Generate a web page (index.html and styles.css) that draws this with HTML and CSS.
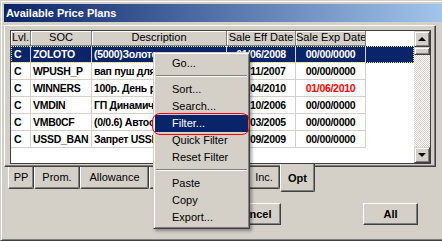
FILE: index.html
```html
<!DOCTYPE html>
<html lang="ru">
<head>
  <meta charset="UTF-8">
  <meta name="viewport" content="width=device-width, initial-scale=1.0">
  <title>Available Price Plans</title>
  <link rel="stylesheet" href="styles.css">
</head>
<body>
  <div class="window">
    <div class="titlebar">Available Price Plans</div>
    <div class="client">
      <div class="tabpage">
        <div class="grid">
          <div class="grid-body">
            <div class="row head">
              <div class="hcell">Lvl.</div>
              <div class="hcell">SOC</div>
              <div class="hcell">Description</div>
              <div class="hcell">Sale Eff Date</div>
              <div class="hcell">Sale Exp Date</div>
              <div class="filler"></div>
            </div>
            <div class="row selected">
              <div class="cell lvl">C</div>
              <div class="cell">ZOLOTO</div>
              <div class="cell">(5000)Золото</div>
              <div class="cell date">01/06/2008</div>
              <div class="cell date">00/00/0000</div>
              <div class="filler"></div>
            </div>
            <div class="row">
              <div class="cell lvl">C</div>
              <div class="cell">WPUSH_P</div>
              <div class="cell">вап пуш для абонентов</div>
              <div class="cell date">01/11/2007</div>
              <div class="cell date">00/00/0000</div>
              <div class="filler"></div>
            </div>
            <div class="row">
              <div class="cell lvl">C</div>
              <div class="cell">WINNERS</div>
              <div class="cell">100р. День рождения</div>
              <div class="cell date">01/04/2010</div>
              <div class="cell date expired">01/06/2010</div>
              <div class="filler"></div>
            </div>
            <div class="row">
              <div class="cell lvl">C</div>
              <div class="cell">VMDIN</div>
              <div class="cell">ГП Динамичный</div>
              <div class="cell date">01/10/2006</div>
              <div class="cell date">00/00/0000</div>
              <div class="filler"></div>
            </div>
            <div class="row">
              <div class="cell lvl">C</div>
              <div class="cell">VMB0CF</div>
              <div class="cell">(0/0.6) Автоответчик</div>
              <div class="cell date">01/03/2005</div>
              <div class="cell date">00/00/0000</div>
              <div class="filler"></div>
            </div>
            <div class="row">
              <div class="cell lvl">C</div>
              <div class="cell">USSD_BAN</div>
              <div class="cell">Запрет USSD</div>
              <div class="cell date">01/09/2009</div>
              <div class="cell date">00/00/0000</div>
              <div class="filler"></div>
            </div>
          </div>
          <div class="vscroll">
            <div class="sb-btn"><span class="arrow-up"></span></div>
            <div class="sb-thumb"></div>
            <div class="sb-track"></div>
            <div class="sb-btn"><span class="arrow-down"></span></div>
          </div>
        </div>
      </div>

      <div class="tabs">
        <div class="tab">PP</div>
        <div class="tab">Prom.</div>
        <div class="tab">Allowance</div>
        <div class="tab">Serv.</div>
        <div class="tab">Excl.</div>
        <div class="tab">Inc.</div>
        <div class="tab active">Opt</div>
      </div>

      <div class="buttons">
        <button class="btn">OK</button>
        <button class="btn">Cancel</button>
        <button class="btn btn-all">All</button>
      </div>
    </div>
  </div>

  <!-- context menu over the grid -->
  <div class="menu">
    <div class="menu-item">Go...</div>
    <div class="menu-sep"></div>
    <div class="menu-item">Sort...</div>
    <div class="menu-item">Search...</div>
    <div class="menu-item active">Filter...<span class="ring"></span></div>
    <div class="menu-item">Quick Filter</div>
    <div class="menu-item">Reset Filter</div>
    <div class="menu-sep"></div>
    <div class="menu-item">Paste</div>
    <div class="menu-item">Copy</div>
    <div class="menu-item">Export...</div>
  </div>
</body>
</html>
```

FILE: styles.css
```css
* {
  box-sizing: border-box;
}
body {
  margin: 0;
  width: 442px;
  height: 241px;
  overflow: hidden;
  background-color: #d4d0c8;
  font-family: "Liberation Sans", Arial, sans-serif;
  font-size: 11px;
  color: #000;
}

/* window frame */
.window {
  width: 460px;
  height: 241px;
  display: flex;
  flex-direction: column;
  padding: 3px;
  background-color: #d4d0c8;
  border: 1px solid;
  border-color: #d4d0c8 #404040 #404040 #d4d0c8;
  box-shadow: inset 1px 1px #fff, inset -1px -1px #808080;
}
.titlebar {
  flex: none;
  height: 18px;
  line-height: 18px;
  padding-left: 2px;
  color: #fff;
  font-weight: bold;
  background: linear-gradient(to right, #0a246a, #a6caf0);
}
.client {
  flex: 1;
  display: flex;
  flex-direction: column;
  padding-top: 3px;
}

/* tab page with the grid */
.tabpage {
  width: 432px;
  padding: 4px 4px 2px 5px;
  border: 1px solid;
  border-color: #fff #404040 #404040 #fff;
  box-shadow: inset -1px -1px #808080;
}
.grid {
  display: flex;
  height: 134px;
  border: 1px solid #404040;
}
.grid-body {
  flex: 1;
  overflow: hidden;
  background-color: #fff;
}
.row {
  display: grid;
  grid-template-columns: 20px 61px 135px 69px 70px 1fr;
  height: 17px;
}
.row.head {
  height: 15px;
}
.hcell {
  line-height: 13px;
  text-align: center;
  white-space: nowrap;
  overflow: hidden;
  background-color: #d4d0c8;
  border-right: 1px solid #808080;
  border-bottom: 1px solid #808080;
  box-shadow: inset 1px 1px #fff;
}
.cell {
  padding: 0 2px;
  line-height: 16px;
  font-size: 10.5px;
  font-weight: bold;
  letter-spacing: -0.3px;
  white-space: nowrap;
  overflow: hidden;
  border-right: 1px solid #d4d0c8;
  border-bottom: 1px solid #d4d0c8;
}
.cell.lvl {
  padding-left: 3px;
}
.cell.date {
  text-align: center;
}
.cell.expired {
  color: #f00;
}
.row.selected {
  background-color: #0a246a;
  color: #fff;
  outline: 1px dotted #f0f080;
  outline-offset: -1px;
}

/* vertical scrollbar */
.vscroll {
  width: 16px;
  display: flex;
  flex-direction: column;
}
.sb-btn,
.sb-thumb {
  background-color: #d4d0c8;
  border: 1px solid;
  border-color: #d4d0c8 #404040 #404040 #d4d0c8;
  box-shadow: inset 1px 1px #fff, inset -1px -1px #808080;
}
.sb-btn {
  height: 16px;
  display: flex;
  align-items: center;
  justify-content: center;
}
.sb-thumb {
  height: 8px;
}
.sb-track {
  flex: 1;
  background: repeating-conic-gradient(#d4d0c8 0 25%, #fff 0 50%) 0 0 / 2px 2px;
}
.arrow-up,
.arrow-down {
  width: 0;
  height: 0;
  border-left: 4px solid transparent;
  border-right: 4px solid transparent;
}
.arrow-up {
  border-bottom: 4px solid #000;
}
.arrow-down {
  border-top: 4px solid #000;
}

/* tabs along the bottom */
.tabs {
  display: grid;
  grid-template-columns: 26px 46px 69px 49px 50px 32px 35px;
  height: 22px;
  margin-left: 4px;
}
.tab {
  height: 22px;
  line-height: 20px;
  text-align: center;
  white-space: nowrap;
  background-color: #d4d0c8;
  border-left: 1px solid #fff;
  border-right: 1px solid #404040;
  border-bottom: 1px solid #404040;
  border-radius: 0 0 2px 2px;
  box-shadow: inset -1px -1px #808080;
}
.tab.active {
  position: relative;
  margin-top: -3px;
  height: 28px;
  line-height: 28px;
  font-weight: bold;
}

/* dialog buttons */
.buttons {
  display: flex;
  gap: 11px;
  margin-top: 14px;
  padding-left: 156px;
}
.btn {
  width: 55px;
  height: 22px;
  padding: 0;
  font-family: inherit;
  font-size: 11px;
  font-weight: bold;
  color: #000;
  background-color: #d4d0c8;
  border: 1px solid;
  border-color: #fff #404040 #404040 #fff;
  box-shadow: inset -1px -1px #808080;
}
.btn-all {
  margin-left: 71px;
}

/* popup menu */
.menu {
  position: absolute;
  left: 153px;
  top: 52px;
  width: 97px;
  padding: 2px 1px;
  background-color: #d4d0c8;
  border: 1px solid;
  border-color: #d4d0c8 #404040 #404040 #d4d0c8;
  box-shadow: inset 1px 1px #fff, inset -1px -1px #808080, 2px 2px 3px rgba(0, 0, 0, 0.35);
}
.menu-item {
  height: 17px;
  line-height: 17px;
  padding-left: 17px;
  white-space: nowrap;
}
.menu-item.active {
  position: relative;
  background-color: #0a246a;
  color: #fff;
}
.ring {
  position: absolute;
  top: -2px;
  bottom: -3px;
  left: -3px;
  right: -2px;
  border: 1px solid #f00;
  border-radius: 8px;
}
.menu-sep {
  height: 9px;
  padding-top: 3px;
}
.menu-sep::after {
  content: "";
  display: block;
  margin: 0 1px;
  border-top: 1px solid #808080;
  border-bottom: 1px solid #fff;
}
```
